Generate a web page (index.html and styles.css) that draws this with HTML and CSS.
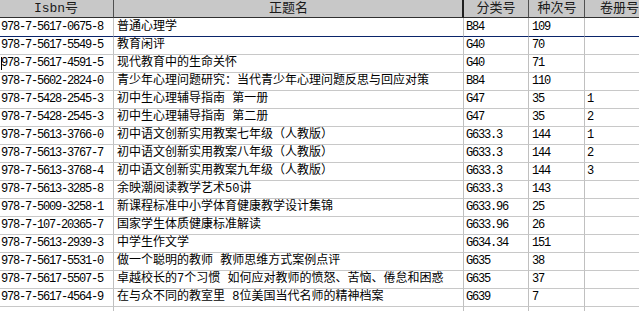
FILE: index.html
```html
<!DOCTYPE html>
<html lang="zh">
<head>
<meta charset="utf-8">
<title>图书列表</title>
<link rel="stylesheet" href="styles.css">
</head>
<body>
<div class="sheet">
  <div class="row head">
    <div class="c c1">Isbn号</div>
    <div class="c c2">正题名</div>
    <div class="c c3">分类号</div>
    <div class="c c4">种次号</div>
    <div class="c c5">卷册号</div>
  </div>
  <div class="row first">
    <div class="c c1 a">978-7-5617-0675-8</div><div class="c c2">普通心理学</div><div class="c c3 a">B84</div><div class="c c4 a">109</div><div class="c c5 a"></div>
  </div>
  <div class="row">
    <div class="c c1 a">978-7-5617-5549-5</div><div class="c c2">教育闲评</div><div class="c c3 a">G40</div><div class="c c4 a">70</div><div class="c c5 a"></div>
  </div>
  <div class="row">
    <div class="c c1 a"><span class="caret"></span>978-7-5617-4591-5</div><div class="c c2">现代教育中的生命关怀</div><div class="c c3 a">G40</div><div class="c c4 a">71</div><div class="c c5 a"></div>
  </div>
  <div class="row">
    <div class="c c1 a">978-7-5602-2824-0</div><div class="c c2">青少年心理问题研究：当代青少年心理问题反思与回应对策</div><div class="c c3 a">B84</div><div class="c c4 a">110</div><div class="c c5 a"></div>
  </div>
  <div class="row">
    <div class="c c1 a">978-7-5428-2545-3</div><div class="c c2">初中生心理辅导指南 第一册</div><div class="c c3 a">G47</div><div class="c c4 a">35</div><div class="c c5 a">1</div>
  </div>
  <div class="row">
    <div class="c c1 a">978-7-5428-2545-3</div><div class="c c2">初中生心理辅导指南 第二册</div><div class="c c3 a">G47</div><div class="c c4 a">35</div><div class="c c5 a">2</div>
  </div>
  <div class="row">
    <div class="c c1 a">978-7-5613-3766-0</div><div class="c c2">初中语文创新实用教案七年级（人教版）</div><div class="c c3 a">G633.3</div><div class="c c4 a">144</div><div class="c c5 a">1</div>
  </div>
  <div class="row">
    <div class="c c1 a">978-7-5613-3767-7</div><div class="c c2">初中语文创新实用教案八年级（人教版）</div><div class="c c3 a">G633.3</div><div class="c c4 a">144</div><div class="c c5 a">2</div>
  </div>
  <div class="row">
    <div class="c c1 a">978-7-5613-3768-4</div><div class="c c2">初中语文创新实用教案九年级（人教版）</div><div class="c c3 a">G633.3</div><div class="c c4 a">144</div><div class="c c5 a">3</div>
  </div>
  <div class="row">
    <div class="c c1 a">978-7-5613-3285-8</div><div class="c c2">余映潮阅读教学艺术50讲</div><div class="c c3 a">G633.3</div><div class="c c4 a">143</div><div class="c c5 a"></div>
  </div>
  <div class="row">
    <div class="c c1 a">978-7-5009-3258-1</div><div class="c c2">新课程标准中小学体育健康教学设计集锦</div><div class="c c3 a">G633.96</div><div class="c c4 a">25</div><div class="c c5 a"></div>
  </div>
  <div class="row">
    <div class="c c1 a">978-7-107-20365-7</div><div class="c c2">国家学生体质健康标准解读</div><div class="c c3 a">G633.96</div><div class="c c4 a">26</div><div class="c c5 a"></div>
  </div>
  <div class="row">
    <div class="c c1 a">978-7-5613-2939-3</div><div class="c c2">中学生作文学</div><div class="c c3 a">G634.34</div><div class="c c4 a">151</div><div class="c c5 a"></div>
  </div>
  <div class="row">
    <div class="c c1 a">978-7-5617-5531-0</div><div class="c c2">做一个聪明的教师 教师思维方式案例点评</div><div class="c c3 a">G635</div><div class="c c4 a">38</div><div class="c c5 a"></div>
  </div>
  <div class="row">
    <div class="c c1 a">978-7-5617-5507-5</div><div class="c c2">卓越校长的7个习惯 如何应对教师的愤怒、苦恼、倦怠和困惑</div><div class="c c3 a">G635</div><div class="c c4 a">37</div><div class="c c5 a"></div>
  </div>
  <div class="row">
    <div class="c c1 a">978-7-5617-4564-9</div><div class="c c2">在与众不同的教室里 8位美国当代名师的精神档案</div><div class="c c3 a">G639</div><div class="c c4 a">7</div><div class="c c5 a"></div>
  </div>
  <div class="row">
    <div class="c c1 a"></div><div class="c c2"></div><div class="c c3 a"></div><div class="c c4 a"></div><div class="c c5 a"></div>
  </div>
</div>
</body>
</html>
```
FILE: styles.css
```css
html, body {
  margin: 0;
  padding: 0;
  background: #ffffff;
}
.sheet {
  width: 639px;
  height: 311px;
  overflow: hidden;
  font-family: "Liberation Mono", "Noto Sans CJK SC", monospace;
  font-size: 12px;
  color: #000000;
}
.row {
  display: grid;
  grid-template-columns: 114px 350px 65px 56px 70px;
  height: 18px;
}
.row.first {
  height: 19px;
}
.c {
  box-sizing: border-box;
  border-right: 1px solid #c0c0c0;
  border-bottom: 1px solid #c8c8c8;
  padding: 0 2px;
  line-height: 17px;
  white-space: nowrap;
  overflow: hidden;
  position: relative;
}
.row.first .c {
  border-bottom-color: #0a246a;
  line-height: 18px;
}
.a {
  letter-spacing: -1.2px;
}
.c1 { padding-left: 1px; }
.c2 { padding-left: 3px; }
.c4 { padding-left: 3px; }
.head .c {
  background: #c8c8c8;
  border-right: 1px solid #505050;
  border-bottom: 1px solid #303030;
  text-align: center;
  font-size: 13px;
  color: #1a1a1a;
  line-height: 17px;
}
.head .c2 {
  border-right: 2px solid #202020;
}
.caret {
  position: absolute;
  left: 1px;
  top: 2px;
  width: 1px;
  height: 13px;
  background: #000000;
}
```
